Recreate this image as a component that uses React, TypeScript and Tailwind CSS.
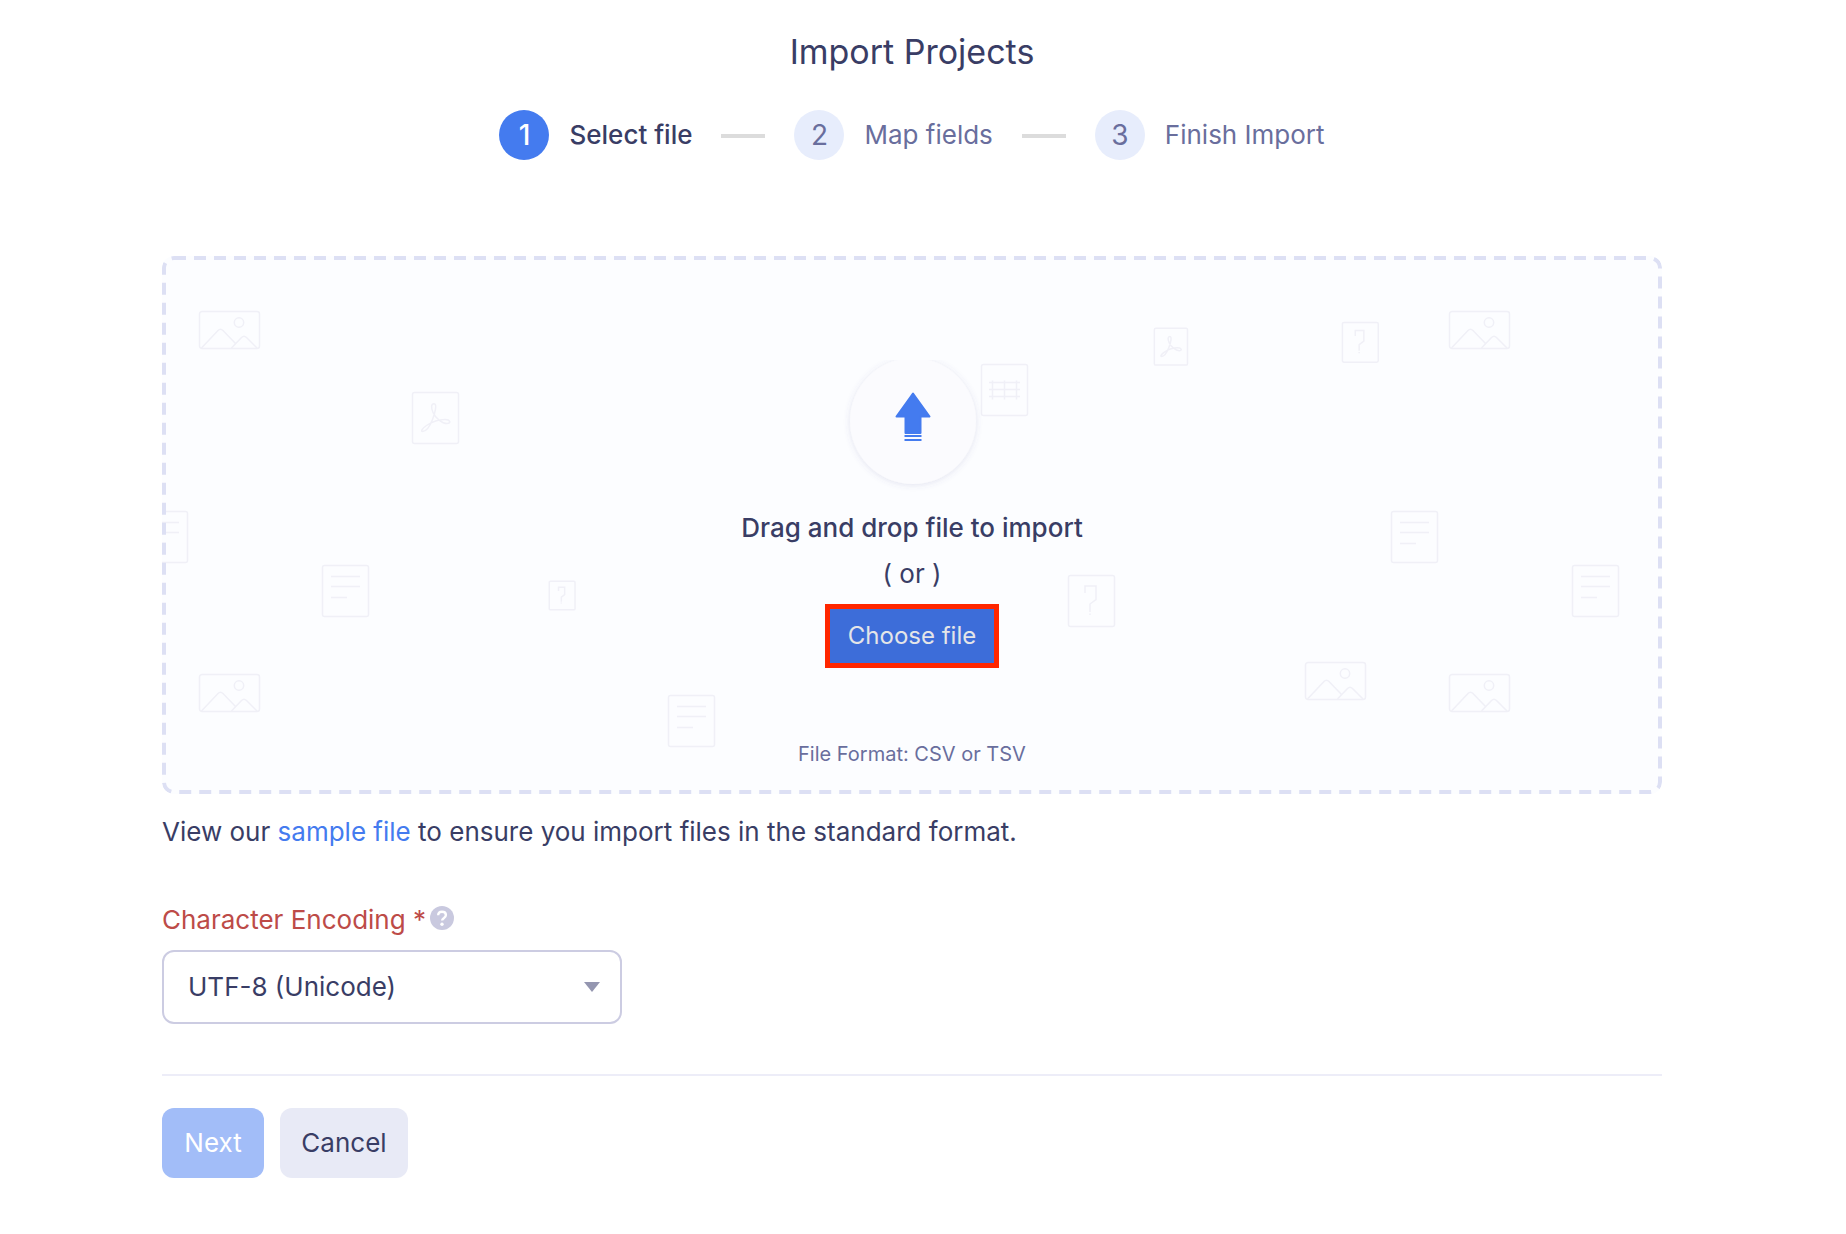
import { Fragment, useRef, useState } from "react";
import clsx from "clsx";

const STEPS = ["Select file", "Map fields", "Finish Import"];

const ENCODINGS = ["UTF-8 (Unicode)", "UTF-16 (Unicode)", "ISO-8859-1", "US-ASCII"];

type ArtKind = "image" | "pdf" | "sheet" | "unknown" | "doc";

const ART: { kind: ArtKind; x: number; y: number; scale?: number }[] = [
  { kind: "image", x: 37, y: 55 },
  { kind: "image", x: 1287, y: 55 },
  { kind: "image", x: 37, y: 418 },
  { kind: "image", x: 1143, y: 406 },
  { kind: "image", x: 1287, y: 418 },
  { kind: "pdf", x: 250, y: 136 },
  { kind: "pdf", x: 992, y: 72, scale: 0.72 },
  { kind: "sheet", x: 819, y: 108 },
  { kind: "unknown", x: 906, y: 319 },
  { kind: "unknown", x: 1180, y: 66, scale: 0.78 },
  { kind: "unknown", x: 387, y: 325, scale: 0.56 },
  { kind: "doc", x: -21, y: 255 },
  { kind: "doc", x: 160, y: 309 },
  { kind: "doc", x: 506, y: 439 },
  { kind: "doc", x: 1229, y: 255 },
  { kind: "doc", x: 1410, y: 309 },
];

function ArtIcon({ kind }: { kind: ArtKind }) {
  if (kind === "image") {
    return (
      <>
        <rect x="0.5" y="0.5" width="60" height="37" rx="2.5" />
        <circle cx="40" cy="11.5" r="4.7" />
        <path d="M2.5 37 19 19.5q2.5-2.5 5 0L36.5 32.5M32.5 37l10-10.5q2.5-2.5 5 0L58 37" />
      </>
    );
  }
  return (
    <>
      <rect x="0.5" y="0.5" width="46" height="51" rx="2" />
      {kind === "pdf" && (
        <path d="M22 11.7C19 11.7 19 16 21 20.5 23.5 26 30 31.5 35 31.5 39.5 31.5 38.5 27.5 33 27.5 27 27.5 19 30.5 14.5 33.5 10 36.5 8.5 39.5 10.5 39.5 14 39.5 18 34 20.5 27.5 23 21 25.5 11.7 22 11.7Z" />
      )}
      {kind === "sheet" && (
        <path d="M8 18.5h31M8 25.5h31M8 32.5h31M11.5 16.5v19M23.5 16.5v19M35.5 16.5v19" />
      )}
      {kind === "unknown" && <path d="M17 18v-7h11v13.500l-6 4.500v8M22 38.500v1.500" />}
      {kind === "doc" && <path d="M9 11.5h29M9 21.5h29M9 32.5h16" />}
    </>
  );
}

function DropZoneArt() {
  return (
    <svg
      aria-hidden="true"
      viewBox="0 0 1500 538"
      preserveAspectRatio="xMidYMid slice"
      className="pointer-events-none absolute inset-0 h-full w-full"
      fill="none"
      stroke="#f0f0f7"
    >
      {ART.map((a) => (
        <g
          key={`${a.x}-${a.y}`}
          transform={`translate(${a.x} ${a.y}) scale(${a.scale ?? 1})`}
          strokeWidth={1.5 / (a.scale ?? 1)}
        >
          <ArtIcon kind={a.kind} />
        </g>
      ))}
    </svg>
  );
}

function DashedOutline() {
  return (
    <svg aria-hidden="true" className="pointer-events-none absolute inset-0 h-full w-full">
      <rect
        x="2"
        y="2"
        rx="10"
        className="h-[calc(100%-4px)] w-[calc(100%-4px)]"
        fill="none"
        stroke="#dde0f4"
        strokeWidth="4"
        strokeDasharray="12 8"
      />
    </svg>
  );
}

function UploadBadge() {
  return (
    <svg aria-hidden="true" width="150" height="136" viewBox="0 0 150 136">
      <defs>
        <filter id="badge-shadow" x="-20%" y="-20%" width="140%" height="140%">
          <feDropShadow dx="0" dy="1" stdDeviation="3" floodColor="#5a5aa0" floodOpacity="0.16" />
        </filter>
      </defs>
      <circle cx="76" cy="61" r="63" fill="#fbfbfe" filter="url(#badge-shadow)" />
      <path
        d="M76 33.5 92.5 56.5H83.5V73H68.5V56.5H59.5Z"
        fill="#447bef"
        stroke="#447bef"
        strokeWidth="2"
        strokeLinejoin="round"
      />
      <path d="M67.5 76h17M67.5 80h17" stroke="#447bef" strokeWidth="2.2" />
    </svg>
  );
}

function Stepper({ current }: { current: number }) {
  return (
    <ol className="mt-[38px] flex items-center justify-center">
      {STEPS.map((label, i) => {
        const active = i === current;
        return (
          <Fragment key={label}>
            {i > 0 && (
              <li aria-hidden="true" className="mx-[29px] mt-0.5 h-1 w-11 bg-[#dcdcdc]" />
            )}
            <li
              aria-current={active ? "step" : undefined}
              className={clsx(
                "flex items-center gap-5",
                active ? "font-medium text-[#393d65]" : "text-[#696e9d]",
              )}
            >
              <span
                className={clsx(
                  "flex size-[50px] items-center justify-center rounded-full text-[28px]",
                  active ? "bg-[#447bef] text-white" : "bg-[#e7edfc]",
                )}
              >
                {i + 1}
              </span>
              {label}
            </li>
          </Fragment>
        );
      })}
    </ol>
  );
}

export default function App() {
  const [encoding, setEncoding] = useState(ENCODINGS[0]);
  const [file, setFile] = useState<File | null>(null);
  const fileInput = useRef<HTMLInputElement>(null);

  return (
    <main className="bg-white pt-8 pr-[184px] pb-14 pl-[162px] font-['Inter',sans-serif] text-[26px] leading-10 text-[#393d65]">
      <h1 className="text-center text-[34px]">Import Projects</h1>
      <Stepper current={0} />

      {/* Drop zone */}
      <section
        aria-label="Upload file"
        onDragOver={(e) => e.preventDefault()}
        onDrop={(e) => {
          e.preventDefault();
          setFile(e.dataTransfer.files[0] ?? null);
        }}
        className="relative mt-24 flex flex-col items-center overflow-hidden rounded-xl bg-[#fcfdff] pt-[104px] pb-5"
      >
        <DropZoneArt />
        <DashedOutline />
        <div className="relative flex flex-col items-center">
          <UploadBadge />
          <p className="mt-3 font-medium">Drag and drop file to import</p>
          <p className="mt-1.5">( or )</p>
          <input
            ref={fileInput}
            type="file"
            accept=".csv,.tsv"
            aria-label="File to import"
            className="hidden"
            onChange={(e) => setFile(e.target.files?.[0] ?? null)}
          />
          <button
            type="button"
            onClick={() => fileInput.current?.click()}
            className="mt-2.5 h-16 w-[174px] border-[5px] border-[#ff2600] bg-[#3d6dd9] text-2xl text-[#e4e5e8]"
          >
            Choose file
          </button>
          <p className="mt-[66px] text-xl leading-10 text-[#696e9d]">File Format: CSV or TSV</p>
        </div>
      </section>

      <p className="mt-[18px]">
        View our{" "}
        <a href="#sample" className="text-[#447bef]">
          sample file
        </a>{" "}
        to ensure you import files in the standard format.
      </p>

      {/* Encoding */}
      <div className="mt-12 flex items-center gap-1 text-[#bd4b48]">
        <label htmlFor="encoding">Character Encoding *</label>
        <svg role="img" aria-label="Help" viewBox="0 0 24 24" className="mb-1 size-6">
          <circle cx="12" cy="12" r="12" fill="#c9c9df" />
          <path
            d="M8.2 9.3C8.2 7 9.8 5.8 12 5.8s3.9 1.3 3.9 3.2c0 1.5-.9 2.2-1.9 2.9-1.200.8-1.900 1.300-1.900 2.700"
            fill="none"
            stroke="#fff"
            strokeWidth="2.4"
          />
          <circle cx="12" cy="18.2" r="1.7" fill="#fff" />
        </svg>
      </div>
      <div className="relative mt-2.5 w-[460px]">
        <select
          id="encoding"
          value={encoding}
          onChange={(e) => setEncoding(e.target.value)}
          className="h-[74px] w-full appearance-none rounded-xl border-2 border-[#cccce2] bg-white px-6"
        >
          {ENCODINGS.map((name) => (
            <option key={name}>{name}</option>
          ))}
        </select>
        <svg
          aria-hidden="true"
          viewBox="0 0 16 10"
          className="pointer-events-none absolute top-8 right-[22px] h-2.5 w-4"
        >
          <path d="M0 0h16L8 10Z" fill="#9496b0" />
        </svg>
      </div>

      <hr className="mt-[50px] border-t-2 border-[#ededf8]" />

      <div className="mt-8 flex gap-4">
        <button
          type="button"
          disabled={!file}
          className="h-[70px] w-[102px] rounded-xl bg-[#447bef] text-white disabled:bg-[#a2bdf8]"
        >
          Next
        </button>
        <button type="button" className="h-[70px] w-32 rounded-xl bg-[#e8eaf6]">
          Cancel
        </button>
      </div>
    </main>
  );
}
